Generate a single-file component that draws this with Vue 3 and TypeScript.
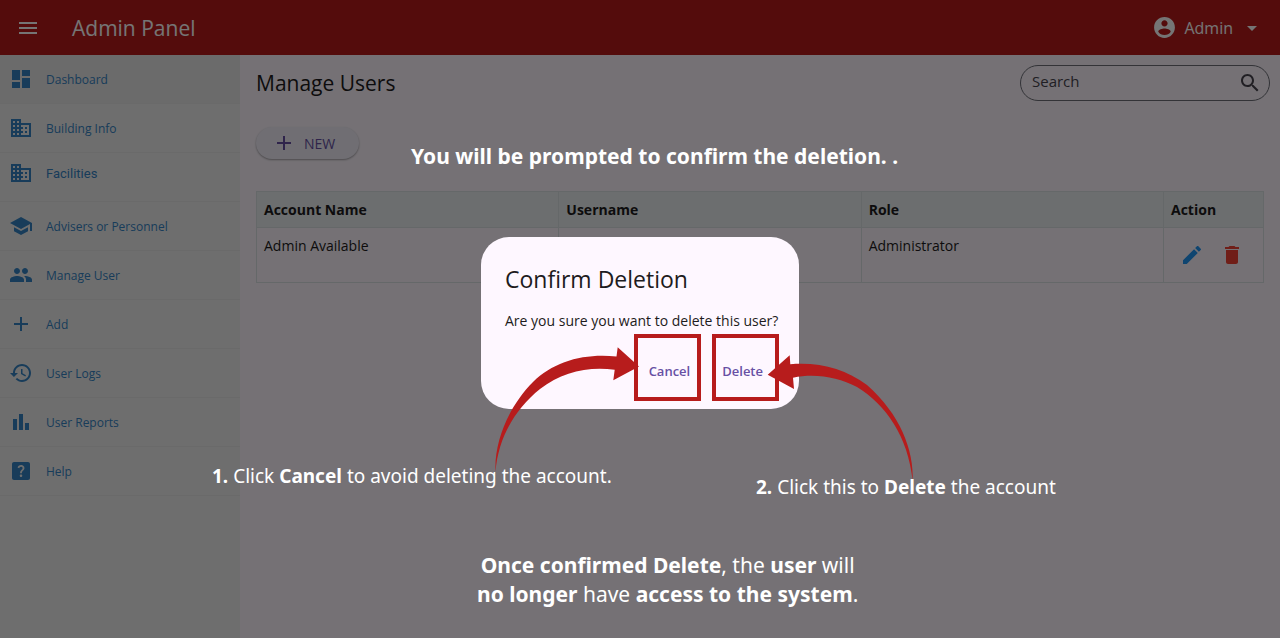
<script setup lang="ts">
import { ref } from 'vue'

interface NavItem {
  label: string
  path: string
  state?: string
}

interface User {
  name: string
  username: string
  role: string
}

const building =
  'M12 7V3H2v18h20V7H12zM6 19H4v-2h2v2zm0-4H4v-2h2v2zm0-4H4V9h2v2zm0-4H4V5h2v2zm4 12H8v-2h2v2zm0-4H8v-2h2v2zm0-4H8V9h2v2zm0-4H8V5h2v2zm10 12h-8v-2h2v-2h-2v-2h2v-2h-2V9h8v10zm-2-8h-2v2h2v-2zm0 4h-2v2h2v-2z'

const plus = 'M19 13h-6v6h-2v-6H5v-2h6V5h2v6h6v2z'

const nav: NavItem[] = [
  { label: 'Dashboard', path: 'M3 13h8V3H3v10zm0 8h8v-6H3v6zm10 0h8V11h-8v10zm0-18v6h8V3h-8z', state: 'active' },
  { label: 'Building Info', path: building },
  { label: 'Facilities', path: building, state: 'raised' },
  { label: 'Advisers or Personnel', path: 'M5 13.18v4L12 21l7-3.82v-4L12 17l-7-3.82zM12 3L1 9l11 6 9-4.91V17h2V9L12 3z' },
  {
    label: 'Manage User',
    path: 'M16 11c1.66 0 2.99-1.34 2.99-3S17.66 5 16 5c-1.66 0-3 1.34-3 3s1.34 3 3 3zm-8 0c1.66 0 2.99-1.34 2.99-3S9.66 5 8 5C6.34 5 5 6.34 5 8s1.34 3 3 3zm0 2c-2.33 0-7 1.17-7 3.5V19h14v-2.5c0-2.33-4.67-3.5-7-3.5zm8 0c-.29 0-.62.02-.97.05 1.16.84 1.97 1.97 1.97 3.45V19h6v-2.5c0-2.33-4.67-3.5-7-3.5z',
  },
  { label: 'Add', path: plus },
  {
    label: 'User Logs',
    path: 'M13 3c-4.97 0-9 4.03-9 9H1l3.89 3.89.07.14L9 12H6c0-3.87 3.13-7 7-7s7 3.13 7 7-3.13 7-7 7c-1.93 0-3.68-.79-4.94-2.06l-1.42 1.42C8.27 19.99 10.51 21 13 21c4.97 0 9-4.03 9-9s-4.03-9-9-9zm-1 5v5l4.28 2.54.72-1.21-3.5-2.08V8H12z',
  },
  { label: 'User Reports', path: 'M4 9h4v11H4zm12 4h4v7h-4zm-6-9h4v16h-4z' },
  {
    label: 'Help',
    path: 'M19 3H5c-1.1 0-2 .9-2 2v14c0 1.1.9 2 2 2h14c1.1 0 2-.9 2-2V5c0-1.1-.9-2-2-2zm-6.99 15c-.7 0-1.26-.56-1.26-1.26 0-.71.56-1.25 1.26-1.25.71 0 1.25.54 1.25 1.25-.01.69-.54 1.26-1.25 1.26zm3.01-7.4c-.76 1.11-1.48 1.46-1.87 2.17-.16.29-.22.48-.22 1.41h-1.82c0-.49-.08-1.29.31-1.98.49-.87 1.42-1.39 1.96-2.16.57-.81.25-2.33-1.37-2.33-1.06 0-1.58.8-1.8 1.48l-1.65-.7C9.01 7.15 10.22 6 11.99 6c1.48 0 2.49.67 3.01 1.52.44.72.7 2.07.02 3.08z',
  },
]

const users: User[] = [{ name: 'Admin Available', username: '', role: 'Administrator' }]
const query = ref('')
</script>

<template>
  <div class="app">
    <header class="topbar">
      <button class="icon-button" aria-label="Menu">
        <svg class="icon" viewBox="0 0 24 24"><path d="M3 18h18v-2H3v2zm0-5h18v-2H3v2zm0-7v2h18V6H3z" /></svg>
      </button>
      <h1 class="brand">Admin Panel</h1>
      <button class="account">
        <svg class="icon avatar" viewBox="0 0 24 24">
          <path d="M12 2C6.48 2 2 6.48 2 12s4.48 10 10 10 10-4.48 10-10S17.52 2 12 2zm0 3c1.66 0 3 1.34 3 3s-1.34 3-3 3-3-1.34-3-3 1.34-3 3-3zm0 14.2c-2.5 0-4.71-1.28-6-3.22.03-1.99 4-3.08 6-3.08 1.99 0 5.97 1.09 6 3.08-1.29 1.94-3.5 3.22-6 3.22z" />
        </svg>
        <span>Admin</span>
        <svg class="icon" viewBox="0 0 24 24"><path d="M7 10l5 5 5-5z" /></svg>
      </button>
    </header>

    <div class="body">
      <nav class="sidebar">
        <a v-for="item in nav" :key="item.label" href="#" class="nav-item" :class="item.state">
          <svg class="icon" viewBox="0 0 24 24"><path :d="item.path" /></svg>
          <span>{{ item.label }}</span>
        </a>
      </nav>

      <main class="content">
        <div class="heading">
          <h2>Manage Users</h2>
          <div class="search">
            <input v-model="query" type="text" placeholder="Search" aria-label="Search" />
            <svg class="icon" viewBox="0 0 24 24">
              <path d="M15.5 14h-.79l-.28-.27C15.41 12.59 16 11.11 16 9.5 16 5.91 13.09 3 9.5 3S3 5.91 3 9.5 5.91 16 9.5 16c1.61 0 3.09-.59 4.23-1.57l.27.28v.79l5 4.99L20.49 19l-4.99-5zm-6 0C7.01 14 5 11.99 5 9.5S7.01 5 9.5 5 14 7.01 14 9.5 11.99 14 9.5 14z" />
            </svg>
          </div>
        </div>

        <button class="new-button">
          <svg class="icon" viewBox="0 0 24 24"><path :d="plus" /></svg>
          <span>NEW</span>
        </button>

        <table class="users">
          <thead>
            <tr>
              <th>Account Name</th>
              <th>Username</th>
              <th>Role</th>
              <th class="action-col">Action</th>
            </tr>
          </thead>
          <tbody>
            <tr v-for="user in users" :key="user.name">
              <td>{{ user.name }}</td>
              <td>{{ user.username }}</td>
              <td>{{ user.role }}</td>
              <td>
                <div class="actions">
                  <button class="icon-button edit" aria-label="Edit">
                    <svg class="icon" viewBox="0 0 24 24">
                      <path d="M3 17.25V21h3.75L17.81 9.94l-3.75-3.75L3 17.25zM20.71 7.04c.39-.39.39-1.02 0-1.41l-2.34-2.34c-.39-.39-1.02-.39-1.41 0l-1.83 1.83 3.75 3.75 1.83-1.83z" />
                    </svg>
                  </button>
                  <button class="icon-button remove" aria-label="Delete user">
                    <svg class="icon" viewBox="0 0 24 24">
                      <path d="M6 19c0 1.1.9 2 2 2h8c1.1 0 2-.9 2-2V7H6v12zM19 4h-3.5l-1-1h-5l-1 1H5v2h14V4z" />
                    </svg>
                  </button>
                </div>
              </td>
            </tr>
          </tbody>
        </table>
      </main>
    </div>

    <div class="backdrop">
      <div class="stage">
        <section class="dialog" role="dialog" aria-labelledby="dialog-title">
          <h2 id="dialog-title">Confirm Deletion</h2>
          <p>Are you sure you want to delete this user?</p>
          <div class="dialog-actions">
            <button>Cancel</button>
            <button>Delete</button>
          </div>
        </section>

        <svg class="marks" viewBox="480 330 440 160" aria-hidden="true">
          <rect x="636" y="336" width="63" height="63" />
          <rect x="714" y="336" width="63" height="63" />
          <path d="M495.500 472C494 440 510 405 533 382C554 361 585 353 616.500 356.500L617.700 347.300L639 366.500L613.300 380.300L614.700 369.700C588 366 562 372 540 389C515 409 498 438 495.500 472Z" />
          <path d="M912.700 481C914 450 900 414 867 385C845 369 820 362 790.300 364.300L789.700 355.300L767.700 374.700L794 389L793 377.700C815 373 838 377 857 387C886 405 908 436 912.700 481Z" />
        </svg>

        <p class="note note-top">You will be prompted to confirm the deletion. .</p>
        <p class="note note-cancel"><b>1.</b> Click <b>Cancel</b> to avoid deleting the account.</p>
        <p class="note note-delete"><b>2.</b> Click this to <b>Delete</b> the account</p>
        <p class="note note-bottom">
          <b>Once confirmed Delete</b>, the <b>user</b> will<br />
          <b>no longer</b> have <b>access to the system</b>.
        </p>
      </div>
    </div>
  </div>
</template>

<style>
body {
  margin: 0;
  background: #fff;
}
</style>

<style scoped>
.app {
  position: relative;
  display: flex;
  flex-direction: column;
  min-height: calc(100vh - 4px);
  overflow: hidden;
  background: #fef7ff;
  color: #1d1b20;
  font-family: 'Open Sans', 'Noto Sans', sans-serif;
  font-size: 14px;
}

h1,
h2,
p {
  margin: 0;
  font-weight: 400;
}

button {
  padding: 0;
  border: 0;
  background: none;
  color: inherit;
  font: inherit;
  cursor: pointer;
}

.icon {
  display: block;
  flex: none;
  width: 24px;
  height: 24px;
  fill: currentColor;
}

.topbar {
  display: flex;
  align-items: center;
  height: 55px;
  padding: 0 16px;
  background: #b71c1c;
  color: #fff;
}

.brand {
  margin-left: 32px;
  font-size: 21px;
}

.account {
  display: flex;
  align-items: center;
  gap: 7px;
  margin-left: auto;
  font-size: 16px;
}

.avatar {
  width: 25px;
  height: 25px;
}

.body {
  display: flex;
  flex: 1;
}

.sidebar {
  flex: none;
  width: 240px;
  background: #f0f0f0;
}

.nav-item {
  display: flex;
  align-items: center;
  gap: 13px;
  box-sizing: border-box;
  height: 49px;
  padding: 0 9px;
  border-bottom: 1px solid #e6e6e6;
  color: #3584c4;
  font-size: 12px;
  text-decoration: none;
}

.nav-item.active {
  background: #e9e9e9;
}

.nav-item.raised {
  padding-bottom: 8px;
  font-family: Roboto, sans-serif;
  font-size: 13px;
}

.content {
  flex: 1;
  min-width: 0;
  padding: 10px 16px;
}

.heading {
  display: flex;
  align-items: center;
  justify-content: space-between;
}

.heading h2 {
  font-size: 21px;
}

.search {
  display: flex;
  align-items: center;
  box-sizing: border-box;
  width: 250px;
  height: 36px;
  margin-right: -6px;
  padding: 0 7px 0 11px;
  border: 1px solid #6f6f78;
  border-radius: 18px;
  color: #49454f;
}

.search input {
  flex: 1;
  min-width: 0;
  padding: 0 0 4px;
  border: 0;
  outline: 0;
  background: none;
  color: inherit;
  font: inherit;
  font-size: 15px;
  font-weight: 500;
}

.search input::placeholder {
  color: inherit;
  opacity: 1;
}

.new-button {
  display: flex;
  align-items: center;
  gap: 8px;
  height: 32px;
  margin: 26px 0 32px;
  padding: 0 24px 0 16px;
  border-radius: 16px;
  background: #f3f0fa;
  box-shadow: 0 1px 2px rgba(0, 0, 0, 0.35);
  color: #6750a4;
  font-weight: 500;
}

.users {
  width: 100%;
  border-collapse: collapse;
  table-layout: fixed;
  font-size: 14px;
  line-height: 19px;
}

.users th,
.users td {
  padding: 8px 8px 8px 7px;
  border: 1px solid #dde2e4;
  text-align: left;
  vertical-align: top;
}

.users thead {
  background: #eceff1;
  color: #1d1b20;
}

.users .action-col {
  width: 84px;
}

.actions {
  display: flex;
  gap: 16px;
  padding: 7px 9px;
}

.edit {
  color: #2196f3;
}

.remove {
  color: #f44336;
}

.backdrop {
  position: absolute;
  inset: 0;
  display: flex;
  align-items: center;
  justify-content: center;
  padding-top: 8px;
  background: rgba(0, 0, 0, 0.54);
}

.stage {
  position: relative;
}

.dialog {
  box-sizing: border-box;
  width: 318px;
  padding: 24px 24px 18px;
  border-radius: 28px;
  background: #fef7ff;
}

.dialog h2 {
  font-size: 23px;
  line-height: 36px;
}

.dialog p {
  margin-top: 14px;
  font-size: 14px;
  line-height: 20px;
  white-space: nowrap;
}

.dialog-actions {
  display: flex;
  justify-content: flex-end;
  gap: 8px;
  margin-top: 20px;
}

.dialog-actions button {
  height: 40px;
  padding: 0 12px;
  color: #6750a4;
  font-size: 13px;
  font-weight: 600;
}

.marks {
  position: absolute;
  top: 93px;
  left: -1px;
  width: 440px;
  height: 160px;
  fill: #b71c1c;
}

.marks rect {
  fill: none;
  stroke: #b71c1c;
  stroke-width: 4;
}

.note {
  position: absolute;
  color: #fff;
  font-family: 'Noto Sans', sans-serif;
  font-size: 19px;
  line-height: 29px;
  white-space: nowrap;
}

.note b {
  font-weight: 700;
}

.note-top {
  top: -95px;
  left: -70px;
  font-size: 21px;
  font-weight: 700;
}

.note-cancel {
  top: 225px;
  left: -269px;
}

.note-delete {
  top: 236px;
  left: 275px;
}

.note-bottom {
  top: 314px;
  left: -4px;
  font-size: 21px;
  text-align: center;
}
</style>
